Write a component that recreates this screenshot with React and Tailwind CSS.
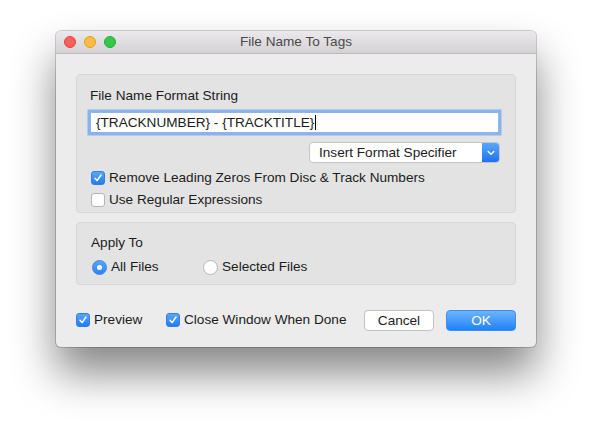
import React from "react";

function Check({ checked }) {
  if (checked) {
    return (
      <div className="w-[14px] h-[14px] rounded-[3px] bg-gradient-to-b from-[#5aa6fb] to-[#1f7cf3] border border-[#2f7fe6] flex items-center justify-center shrink-0">
        <svg width="10" height="10" viewBox="0 0 10 10">
          <path d="M2 5.3 L4.1 7.6 L8 2" fill="none" stroke="white" strokeWidth="1.5" strokeLinecap="round" strokeLinejoin="round" />
        </svg>
      </div>
    );
  }
  return <div className="w-[14px] h-[14px] rounded-[3px] bg-white border border-[#b5b5b5] shrink-0" />;
}

function Radio({ checked }) {
  if (checked) {
    return (
      <div className="w-[15px] h-[15px] rounded-full bg-gradient-to-b from-[#5aa6fb] to-[#2a82f4] border border-[#3a86e8] flex items-center justify-center shrink-0">
        <div className="w-[5px] h-[5px] rounded-full bg-white" />
      </div>
    );
  }
  return <div className="w-[15px] h-[15px] rounded-full bg-white border border-[#b5b5b5] shrink-0" />;
}

export default function App() {
  return (
    <div
      className="w-[592px] h-[427px] bg-white pl-[56px] pt-[31px] text-[13.6px] text-[#1c1c1c] overflow-hidden"
      style={{ fontFamily: '"Liberation Sans", Arial, sans-serif' }}
    >
      <div className="w-[480px] h-[316px] rounded-[5px] bg-[#ececec] flex flex-col overflow-hidden shadow-[0_0_0_1px_rgba(0,0,0,0.18),0_26px_44px_rgba(0,0,0,0.48)]">
        {/* Title bar */}
        <div className="h-[23px] shrink-0 bg-gradient-to-b from-[#ebe9eb] to-[#d4d2d4] border-b border-[#b9b9b9] flex items-center relative">
          <div className="flex items-center gap-[8px] pl-[8px]">
            <div className="w-[12px] h-[12px] rounded-full bg-[#fc605c] border border-[#e0443e]" />
            <div className="w-[12px] h-[12px] rounded-full bg-[#fdbc40] border border-[#dea123]" />
            <div className="w-[12px] h-[12px] rounded-full bg-[#34c84a] border border-[#27aa35]" />
          </div>
          <div className="absolute inset-0 flex items-center justify-center text-[#4a4a4a] pointer-events-none">
            File Name To Tags
          </div>
        </div>

        {/* Content */}
        <div className="flex flex-col px-[20px] pt-[20px]">
          {/* Group 1 */}
          <div className="h-[139px] rounded-[4px] bg-[#e3e3e3] border border-[#d6d6d6] flex flex-col pt-[13px]">
            <div className="pl-[13px] leading-[16px]">File Name Format String</div>
            <div className="ml-[13px] mt-[8px] w-[409px] h-[21px] bg-white border border-[#8fb5ea] shadow-[0_0_0_2.5px_#8ab3eb] flex items-center pl-[5px] leading-[16px]">
              <span>{"{TRACKNUMBER} - {TRACKTITLE}"}</span>
              <span className="w-[1px] h-[15px] bg-black ml-[1px]" />
            </div>
            <div className="flex justify-end pr-[15px] mt-[9px]">
              <div className="w-[191px] h-[21px] rounded-[4px] bg-white border border-[#c4c4c4] flex items-center overflow-hidden">
                <div className="flex-1 pl-[9px] leading-[16px]">Insert Format Specifier</div>
                <div className="w-[17px] h-full bg-gradient-to-b from-[#5aa6fb] to-[#1b72f3] flex items-center justify-center">
                  <svg width="8" height="6" viewBox="0 0 8 6">
                    <path d="M1.2 1.5 L4 4.3 L6.8 1.5" fill="none" stroke="white" strokeWidth="1.4" strokeLinecap="round" strokeLinejoin="round" />
                  </svg>
                </div>
              </div>
            </div>
            <div className="flex items-center gap-[4px] pl-[14px] mt-[7px] h-[16px]">
              <Check checked />
              <span>Remove Leading Zeros From Disc &amp; Track Numbers</span>
            </div>
            <div className="flex items-center gap-[4px] pl-[14px] mt-[6px] h-[16px]">
              <Check />
              <span>Use Regular Expressions</span>
            </div>
          </div>

          {/* Group 2 */}
          <div className="mt-[9px] h-[63px] rounded-[4px] bg-[#e3e3e3] border border-[#d6d6d6] flex flex-col pt-[12px]">
            <div className="pl-[14px] leading-[16px]">Apply To</div>
            <div className="flex items-center mt-[8px] h-[16px] pl-[15px]">
              <div className="flex items-center gap-[4px] w-[111px]">
                <Radio checked />
                <span>All Files</span>
              </div>
              <div className="flex items-center gap-[4px]">
                <Radio />
                <span>Selected Files</span>
              </div>
            </div>
          </div>

          {/* Bottom row */}
          <div className="flex items-center mt-[25px] h-[21px]">
            <div className="flex items-center gap-[4px] w-[90px]">
              <Check checked />
              <span>Preview</span>
            </div>
            <div className="flex items-center gap-[4px]">
              <Check checked />
              <span>Close Window When Done</span>
            </div>
            <div className="flex-1" />
            <div className="w-[70px] h-[21px] rounded-[4px] bg-white border border-[#c2c2c2] flex items-center justify-center leading-[16px]">
              Cancel
            </div>
            <div className="w-[70px] h-[21px] ml-[12px] rounded-[4px] bg-gradient-to-b from-[#6cb3fa] to-[#1a82fb] border border-[#3d8fef] text-white flex items-center justify-center leading-[16px]">
              OK
            </div>
          </div>
        </div>
      </div>
    </div>
  );
}
